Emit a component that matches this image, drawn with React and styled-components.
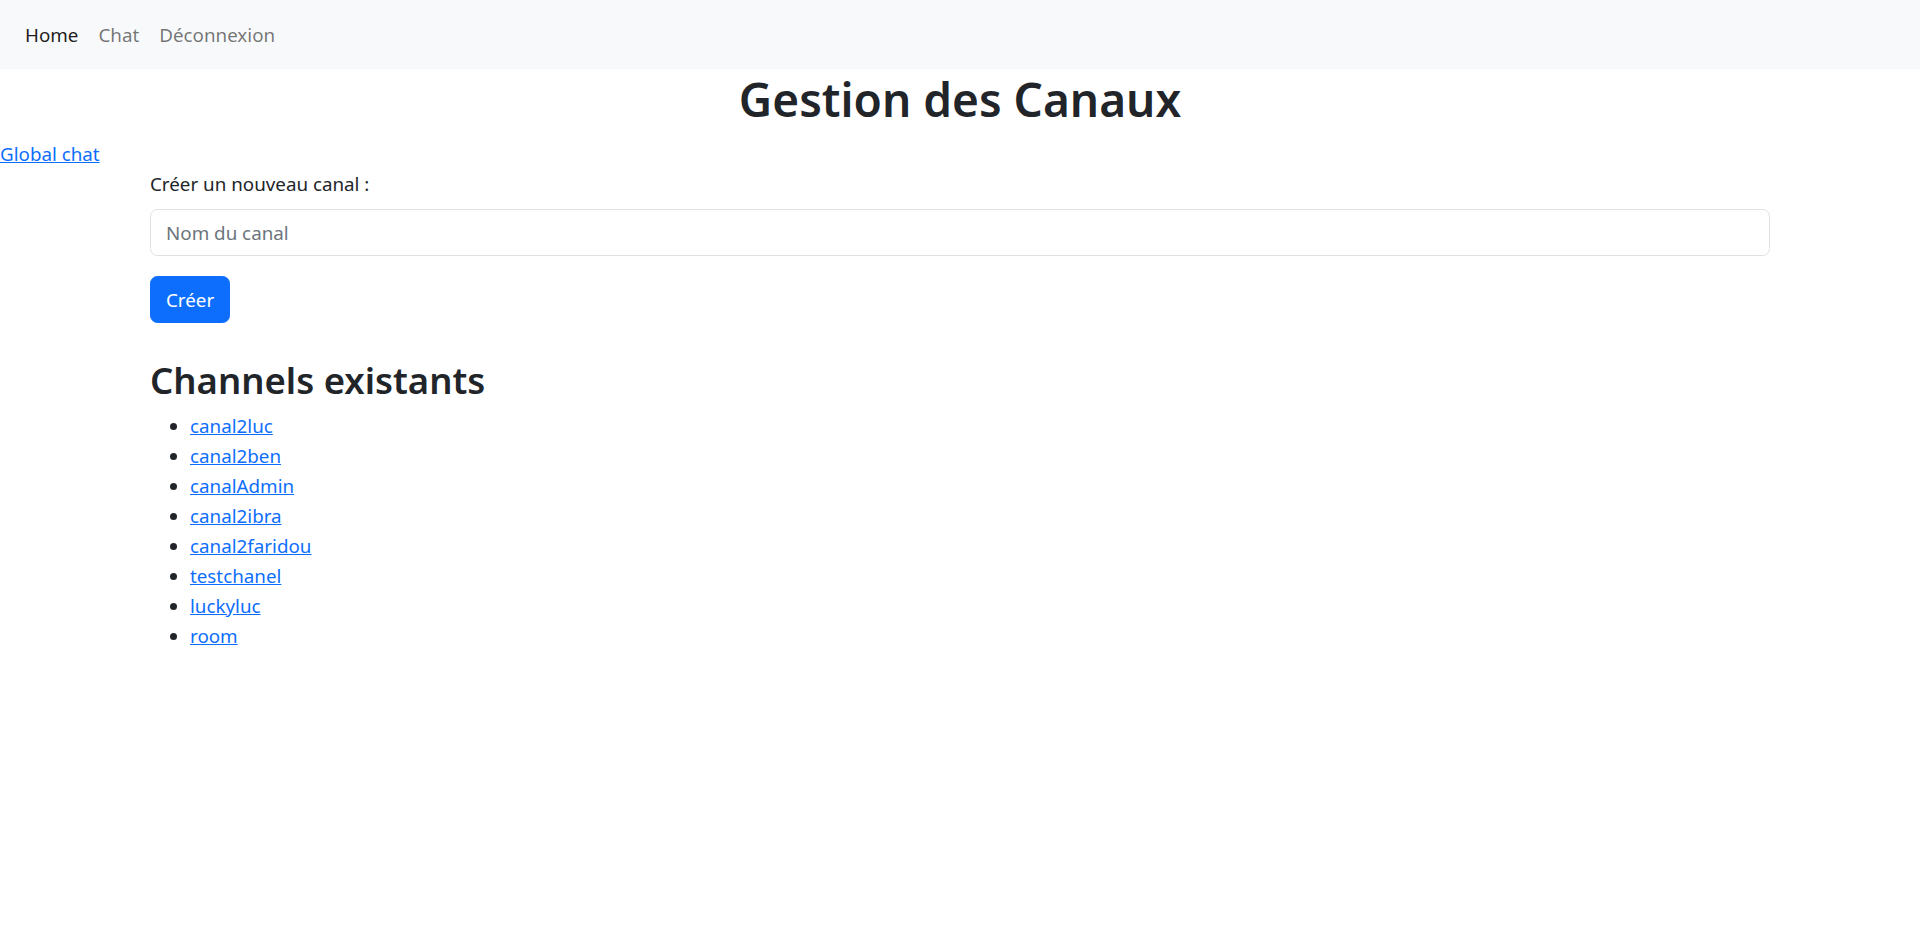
import styled, { createGlobalStyle } from 'styled-components';

const GlobalStyle = createGlobalStyle`
  * {
    box-sizing: border-box;
  }

  body {
    margin: 0;
    background: #fff;
    color: #212529;
    font-family: "Noto Sans", "Open Sans", sans-serif;
    font-size: 18.8px;
    line-height: 30px;
  }
`;

const Navbar = styled.nav`
  display: flex;
  align-items: center;
  height: 69px;
  padding: 0 15px;
  background: #f8f9fa;
`;

const NavLink = styled.a`
  padding: 10px;
  color: ${(p) => (p.$active ? 'rgba(0, 0, 0, 0.9)' : 'rgba(0, 0, 0, 0.55)')};
  text-decoration: none;
  cursor: pointer;
`;

const PageTitle = styled.h1`
  margin: 0 0 10px;
  font-size: 46px;
  font-weight: 600;
  line-height: 60px;
  text-align: center;
`;

const TextLink = styled.a`
  color: #0d6efd;
  text-decoration: underline;
  cursor: pointer;
`;

const Container = styled.main`
  max-width: 1650px;
  margin: 0 auto;
  padding: 0 15px;
`;

const Label = styled.label`
  display: block;
  margin-bottom: 10px;
`;

const Input = styled.input`
  display: block;
  width: 100%;
  height: 47px;
  margin-bottom: 20px;
  padding: 7.5px 15px;
  border: 1px solid #dee2e6;
  border-radius: 7.5px;
  font: inherit;
  color: #212529;

  &::placeholder {
    color: #6c757d;
  }
`;

const Button = styled.button`
  display: inline-block;
  height: 47px;
  padding: 7.5px 15px;
  border: 1px solid #0d6efd;
  border-radius: 7.5px;
  background: #0d6efd;
  color: #fff;
  font: inherit;
  cursor: pointer;
`;

const SectionTitle = styled.h2`
  margin: 33px 0 7px;
  font-size: 36.5px;
  font-weight: 600;
  line-height: 48px;
`;

const ChannelList = styled.ul`
  margin: 0;
  padding-left: 40px;
`;

const channels = [
  'canal2luc',
  'canal2ben',
  'canalAdmin',
  'canal2ibra',
  'canal2faridou',
  'testchanel',
  'luckyluc',
  'room',
];

function App() {
  return (
    <>
      <GlobalStyle />
      <Navbar>
        <NavLink $active>Home</NavLink>
        <NavLink>Chat</NavLink>
        <NavLink>Déconnexion</NavLink>
      </Navbar>

      <PageTitle>Gestion des Canaux</PageTitle>
      <TextLink>Global chat</TextLink>

      <Container>
        <Label htmlFor="channel-name">Créer un nouveau canal :</Label>
        <Input id="channel-name" type="text" placeholder="Nom du canal" />
        <Button type="button">Créer</Button>

        <SectionTitle>Channels existants</SectionTitle>
        <ChannelList>
          {channels.map((name) => (
            <li key={name}>
              <TextLink>{name}</TextLink>
            </li>
          ))}
        </ChannelList>
      </Container>
    </>
  );
}

export default App;
